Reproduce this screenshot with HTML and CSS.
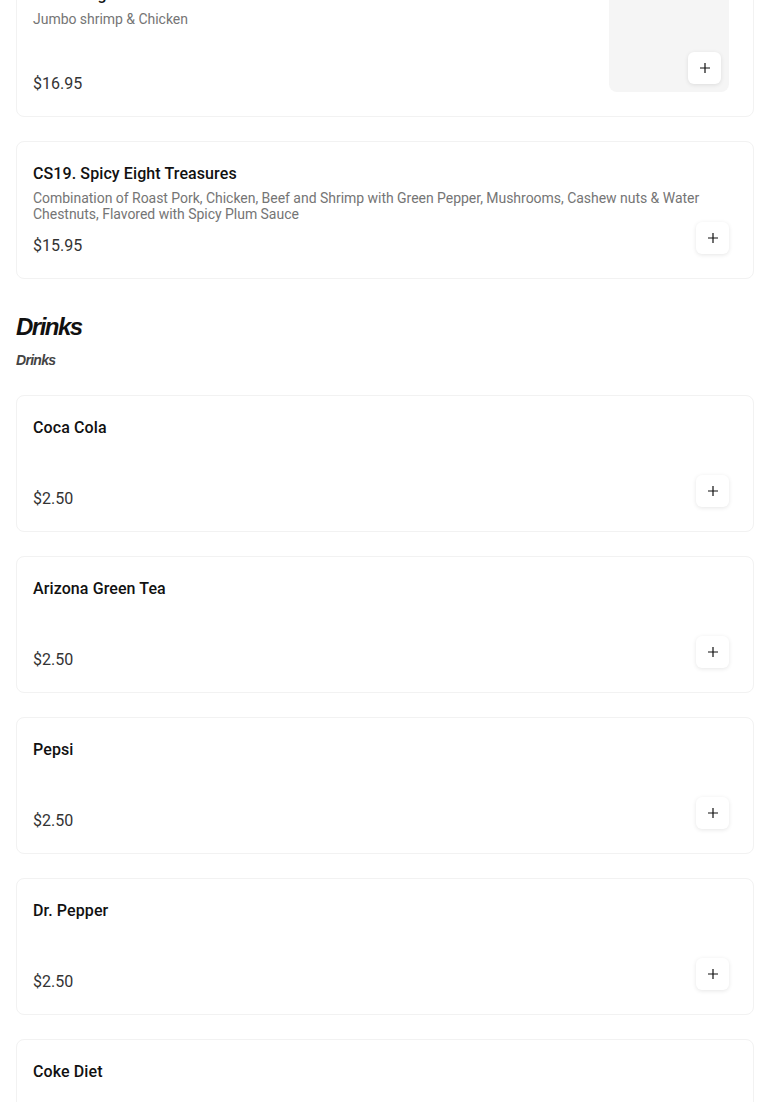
FILE: index.html
```html
<!DOCTYPE html>
<html lang="en">
<head>
  <meta charset="UTF-8">
  <meta name="viewport" content="width=device-width, initial-scale=1.0">
  <title>Menu</title>
  <link rel="stylesheet" href="styles.css">
</head>
<body>
<div class="menu">
  <div class="item">
    <div class="info">
      <div class="name">Hot Orange Chicken Duo</div>
      <div class="desc">Jumbo shrimp &amp; Chicken</div>
      <div class="price">$16.95</div>
    </div>
    <div class="photo">
      <button class="add" aria-label="Add"><svg viewBox="0 0 12 12"><path d="M6 1v10M1 6h10"/></svg></button>
    </div>
  </div>

  <div class="item">
    <div class="info">
      <div class="name">CS19. Spicy Eight Treasures</div>
      <div class="desc">Combination of Roast Pork, Chicken, Beef and Shrimp with Green Pepper, Mushrooms, Cashew nuts &amp; Water Chestnuts, Flavored with Spicy Plum Sauce</div>
      <div class="price">$15.95</div>
    </div>
    <button class="add" aria-label="Add"><svg viewBox="0 0 12 12"><path d="M6 1v10M1 6h10"/></svg></button>
  </div>

  <div class="section-head">
    <h2>Drinks</h2>
    <p>Drinks</p>
  </div>

  <div class="item">
    <div class="info">
      <div class="name">Coca Cola</div>
      <div class="price">$2.50</div>
    </div>
    <button class="add" aria-label="Add"><svg viewBox="0 0 12 12"><path d="M6 1v10M1 6h10"/></svg></button>
  </div>

  <div class="item">
    <div class="info">
      <div class="name">Arizona Green Tea</div>
      <div class="price">$2.50</div>
    </div>
    <button class="add" aria-label="Add"><svg viewBox="0 0 12 12"><path d="M6 1v10M1 6h10"/></svg></button>
  </div>

  <div class="item">
    <div class="info">
      <div class="name">Pepsi</div>
      <div class="price">$2.50</div>
    </div>
    <button class="add" aria-label="Add"><svg viewBox="0 0 12 12"><path d="M6 1v10M1 6h10"/></svg></button>
  </div>

  <div class="item">
    <div class="info">
      <div class="name">Dr. Pepper</div>
      <div class="price">$2.50</div>
    </div>
    <button class="add" aria-label="Add"><svg viewBox="0 0 12 12"><path d="M6 1v10M1 6h10"/></svg></button>
  </div>

  <div class="item">
    <div class="info">
      <div class="name">Coke Diet</div>
      <div class="price">$2.50</div>
    </div>
    <button class="add" aria-label="Add"><svg viewBox="0 0 12 12"><path d="M6 1v10M1 6h10"/></svg></button>
  </div>
</div>
</body>
</html>
```
FILE: styles.css
```css
html, body {
  height: 100%;
  overflow: hidden;
}

body {
  font-family: 'Roboto', sans-serif;
  background: white;
  color: #111;
  margin: 0;
}

/* the page is scrolled down a bit, first card is cut by the top edge */
.menu {
  margin-top: -38px;
  padding: 0 16px;
  display: flex;
  flex-direction: column;
  gap: 24px;
}

.item {
  position: relative;
  box-sizing: border-box;
  min-height: 137px;
  display: flex;
  gap: 16px;
  padding: 22px 24px 23px 16px;
  background: white;
  border: 1px solid #f2f2f2;
  border-radius: 8px;
  flex-shrink: 0;
}

.info {
  flex: 1;
  display: flex;
  flex-direction: column;
}

.name {
  font-size: 16px;
  line-height: 20px;
  font-weight: 500;
  letter-spacing: 0.1px;
  color: #111;
}

.desc {
  margin-top: 6px;
  font-size: 14px;
  line-height: 16px;
  letter-spacing: -0.03px;
  color: #757575;
}

.price {
  margin-top: auto;
  padding-top: 15px;
  font-size: 16px;
  line-height: 18px;
  color: #333;
}

.photo {
  position: relative;
  width: 120px;
  height: 107px;
  margin-bottom: 1px;
  background: #f5f5f5;
  border-radius: 8px;
}

.add {
  position: absolute;
  right: 24px;
  bottom: 24px;
  box-sizing: border-box;
  width: 33px;
  height: 32px;
  padding: 0;
  display: flex;
  align-items: center;
  justify-content: center;
  background: white;
  border: none;
  border-radius: 6px;
  box-shadow: 0 1px 4px rgba(0,0,0,0.1);
}

.add svg {
  width: 12px;
  height: 12px;
  fill: none;
  stroke: #111;
  stroke-width: 1.2;
}

.photo .add {
  right: 8px;
  bottom: 8px;
}

.section-head {
  margin: 8px 0 0;
  padding-bottom: 1px;
}

.section-head h2 {
  margin: 0;
  font-family: 'Liberation Sans', sans-serif;
  font-style: italic;
  font-weight: 700;
  font-size: 24px;
  line-height: 32px;
  letter-spacing: -1.5px;
  color: #111;
}

.section-head p {
  margin: 7px 0 0;
  font-family: 'Liberation Sans', sans-serif;
  font-style: italic;
  font-weight: 700;
  font-size: 14px;
  line-height: 20px;
  letter-spacing: -0.7px;
  color: #444;
}
```
